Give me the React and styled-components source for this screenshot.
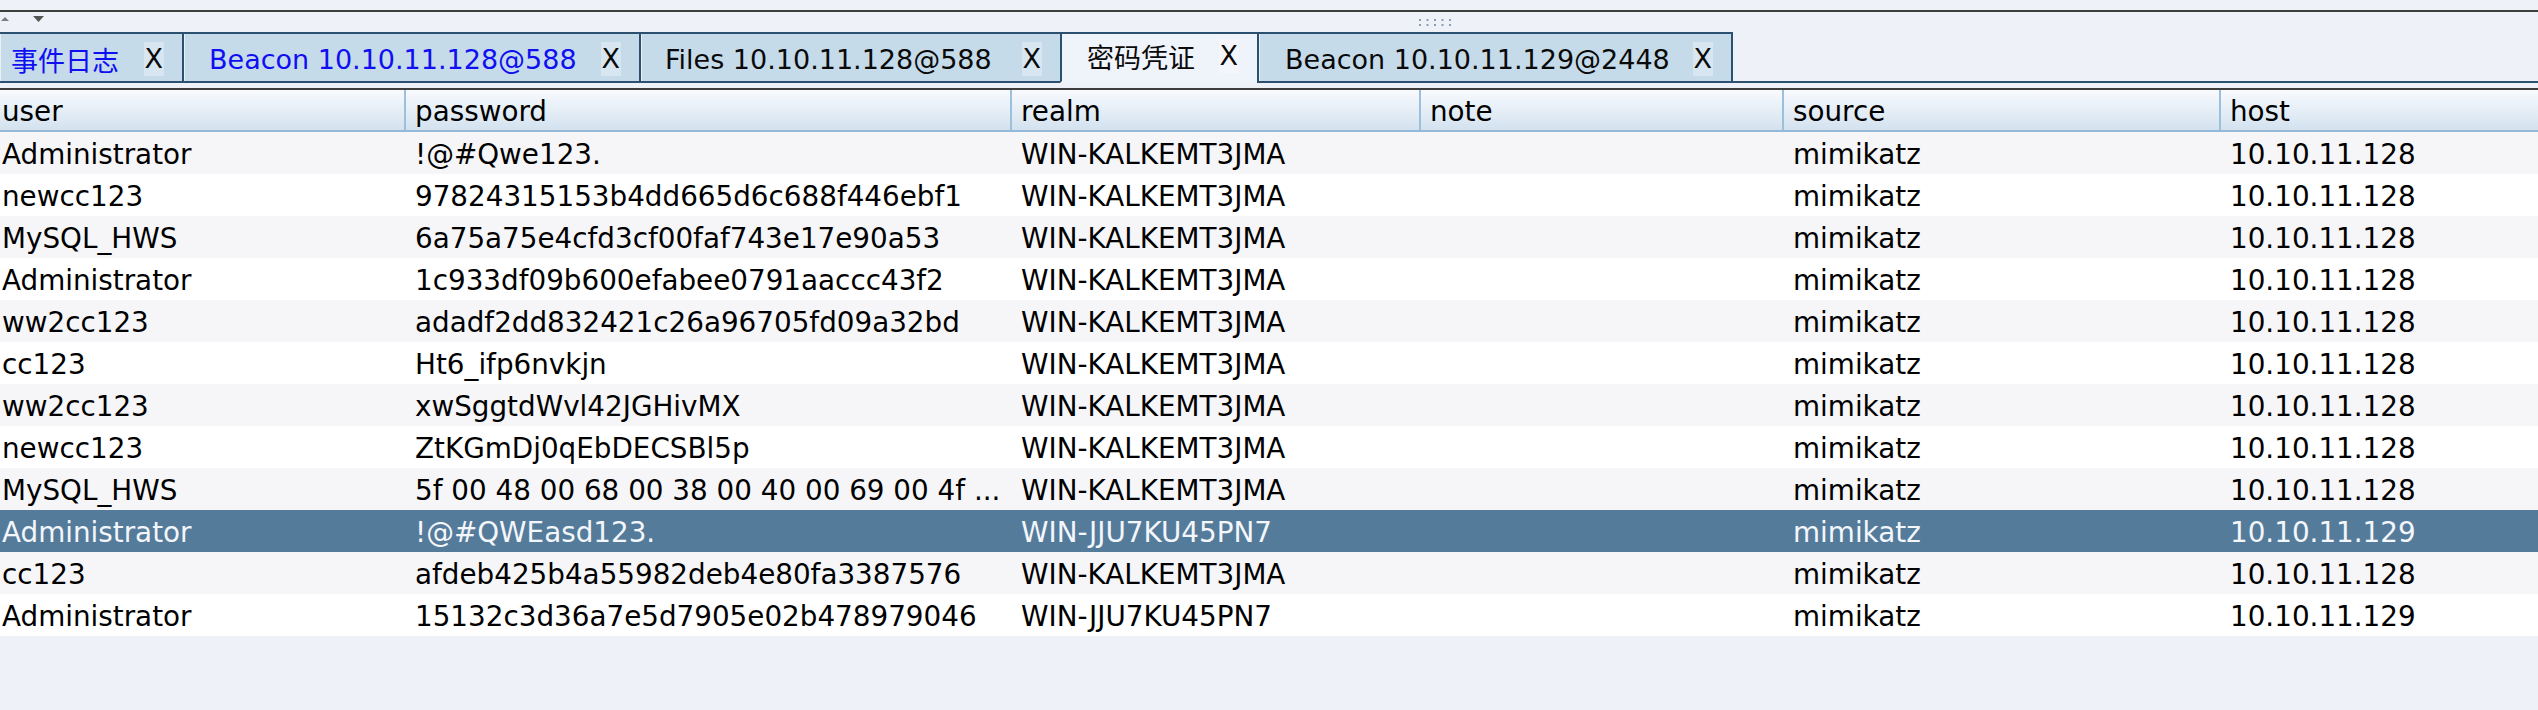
import React from "react"
import styled, { createGlobalStyle } from "styled-components"

const GlobalStyle = createGlobalStyle`
  html, body {
    margin: 0;
    padding: 0;
    background: #eef1f8;
  }
  body {
    font-family: "DejaVu Sans", "Noto Sans CJK SC", sans-serif;
  }
`

const Window = styled.div`
  width: 2538px;
  height: 710px;
  overflow: hidden;
  background: #eef1f8;
  display: flex;
  flex-direction: column;
`

const TopGap = styled.div`
  height: 10px;
  flex: none;
`

const Rule = styled.div`
  height: 2px;
  flex: none;
  background: #3d3d3d;
`

const SplitBar = styled.div`
  height: 20px;
  flex: none;
  display: flex;
  align-items: center;
`

const Grip = styled.div`
  margin-left: 1372px;
  display: flex;
`

const TabStrip = styled.div`
  height: 51px;
  flex: none;
  display: flex;
`

const Tab = styled.div`
  box-sizing: border-box;
  width: ${p => p.w}px;
  height: 100%;
  flex: none;
  display: flex;
  align-items: center;
  justify-content: space-between;
  padding: ${p => (p.active ? "0 18px 3px" : "3px 18px 0")} ${p => p.pl}px;
  padding-left: ${p => p.pl}px;
  background: ${p => (p.active ? "#eff3fa" : "#c6dbea")};
  border-top: 2px solid #2c5070;
  border-left: ${p => (p.first ? "none" : "2px solid #2c5070")};
  border-right: ${p => (p.last ? "2px solid #2c5070" : "none")};
  border-bottom: 2px solid ${p => (p.active ? "transparent" : "#2c5070")};
  box-shadow: ${p => (p.active ? "none" : "inset 1px 0 0 #e8f0f6")};
`

const TabLabel = styled.span`
  font-size: 27px;
  white-space: nowrap;
  color: ${p => (p.blue ? "#0f0ff2" : "#0a0a0a")};
`

const CloseBox = styled.span`
  font-size: 27px;
  line-height: 34px;
  padding: 0 1px;
  color: #0a0a0a;
  background: rgba(255, 255, 255, 0.3);
`

const TabFill = styled.div`
  flex: 1;
  border-bottom: 2px solid #2c5070;
`

const Spacer = styled.div`
  height: 5px;
  flex: none;
`

const cols = `
  display: grid;
  grid-template-columns: 404px 606px 409px 363px 437px 1fr;
`

const HeaderRow = styled.div`
  ${cols}
  box-sizing: border-box;
  height: 42px;
  flex: none;
  border-bottom: 2px solid #93b8d8;
  background: linear-gradient(#f8fafe, #d3e2ef);
`

const HeadCell = styled.div`
  display: flex;
  align-items: center;
  padding-top: 2px;
  padding-left: ${p => (p.first ? 2 : 9)}px;
  border-left: ${p => (p.first ? "none" : "2px solid #9cbfdc")};
  font-size: 27.8px;
  color: #000;
`

const Row = styled.div`
  ${cols}
  height: 42px;
  flex: none;
  background: ${p => (p.selected ? "#557b9a" : p.odd ? "#f6f6f9" : "#ffffff")};
  color: ${p => (p.selected ? "#f3f6fa" : "#000")};
`

const Cell = styled.div`
  display: flex;
  align-items: center;
  padding-top: 2px;
  padding-left: ${p => (p.first ? 2 : 11)}px;
  font-size: 27.8px;
  white-space: nowrap;
  overflow: hidden;
`

const tabs = [
  { label: "事件日志", w: 182, pl: 11, blue: true, first: true },
  { label: "Beacon 10.10.11.128@588", w: 457, pl: 25, blue: true },
  { label: "Files 10.10.11.128@588", w: 421, pl: 24 },
  { label: "密码凭证", w: 197, pl: 25, active: true },
  { label: "Beacon 10.10.11.129@2448", w: 476, pl: 26, last: true },
]

const headers = ["user", "password", "realm", "note", "source", "host"]

const K = "WIN-KALKEMT3JMA"
const J = "WIN-JJU7KU45PN7"
const H8 = "10.10.11.128"
const H9 = "10.10.11.129"

const rows = [
  ["Administrator", "!@#Qwe123.", K, H8],
  ["newcc123", "97824315153b4dd665d6c688f446ebf1", K, H8],
  ["MySQL_HWS", "6a75a75e4cfd3cf00faf743e17e90a53", K, H8],
  ["Administrator", "1c933df09b600efabee0791aaccc43f2", K, H8],
  ["ww2cc123", "adadf2dd832421c26a96705fd09a32bd", K, H8],
  ["cc123", "Ht6_ifp6nvkjn", K, H8],
  ["ww2cc123", "xwSggtdWvl42JGHivMX", K, H8],
  ["newcc123", "ZtKGmDj0qEbDECSBl5p", K, H8],
  ["MySQL_HWS", "5f 00 48 00 68 00 38 00 40 00 69 00 4f ...", K, H8],
  ["Administrator", "!@#QWEasd123.", J, H9],
  ["cc123", "afdeb425b4a55982deb4e80fa3387576", K, H8],
  ["Administrator", "15132c3d36a7e5d7905e02b478979046", J, H9],
]

const SELECTED = 9

const PaneArrows = () => (
  <svg width="46" height="20" viewBox="0 0 46 20">
    <polygon points="1,9 9,9 5,5" fill="#7c7c7c" />
    <polygon points="33,4 44,4 38.5,10" fill="#555" />
  </svg>
)

const GripDots = () => (
  <svg width="38" height="10" viewBox="0 0 38 10">
    {[0, 1, 2, 3, 4].map(i => (
      <rect key={"a" + i} x={1 + i * 7.5} y={2} width="2" height="2" fill="#8c9db3" />
    ))}
    {[0, 1, 2, 3, 4].map(i => (
      <rect key={"b" + i} x={1 + i * 7.5} y={7} width="2" height="2" fill="#8c9db3" />
    ))}
  </svg>
)

const App = () => (
  <Window>
    <GlobalStyle />
    <TopGap />
    <Rule />
    <SplitBar>
      <PaneArrows />
      <Grip>
        <GripDots />
      </Grip>
    </SplitBar>
    <TabStrip>
      {tabs.map(t => (
        <Tab key={t.label} w={t.w} pl={t.pl} active={t.active} first={t.first} last={t.last}>
          <TabLabel blue={t.blue}>{t.label}</TabLabel>
          <CloseBox>X</CloseBox>
        </Tab>
      ))}
      <TabFill />
    </TabStrip>
    <Spacer />
    <Rule />
    <HeaderRow>
      {headers.map((h, i) => (
        <HeadCell key={h} first={i === 0}>
          {h}
        </HeadCell>
      ))}
    </HeaderRow>
    {rows.map(([user, pass, realm, host], i) => (
      <Row key={i} odd={i % 2 === 0} selected={i === SELECTED}>
        <Cell first>{user}</Cell>
        <Cell>{pass}</Cell>
        <Cell>{realm}</Cell>
        <Cell />
        <Cell>mimikatz</Cell>
        <Cell>{host}</Cell>
      </Row>
    ))}
  </Window>
)

export default App
